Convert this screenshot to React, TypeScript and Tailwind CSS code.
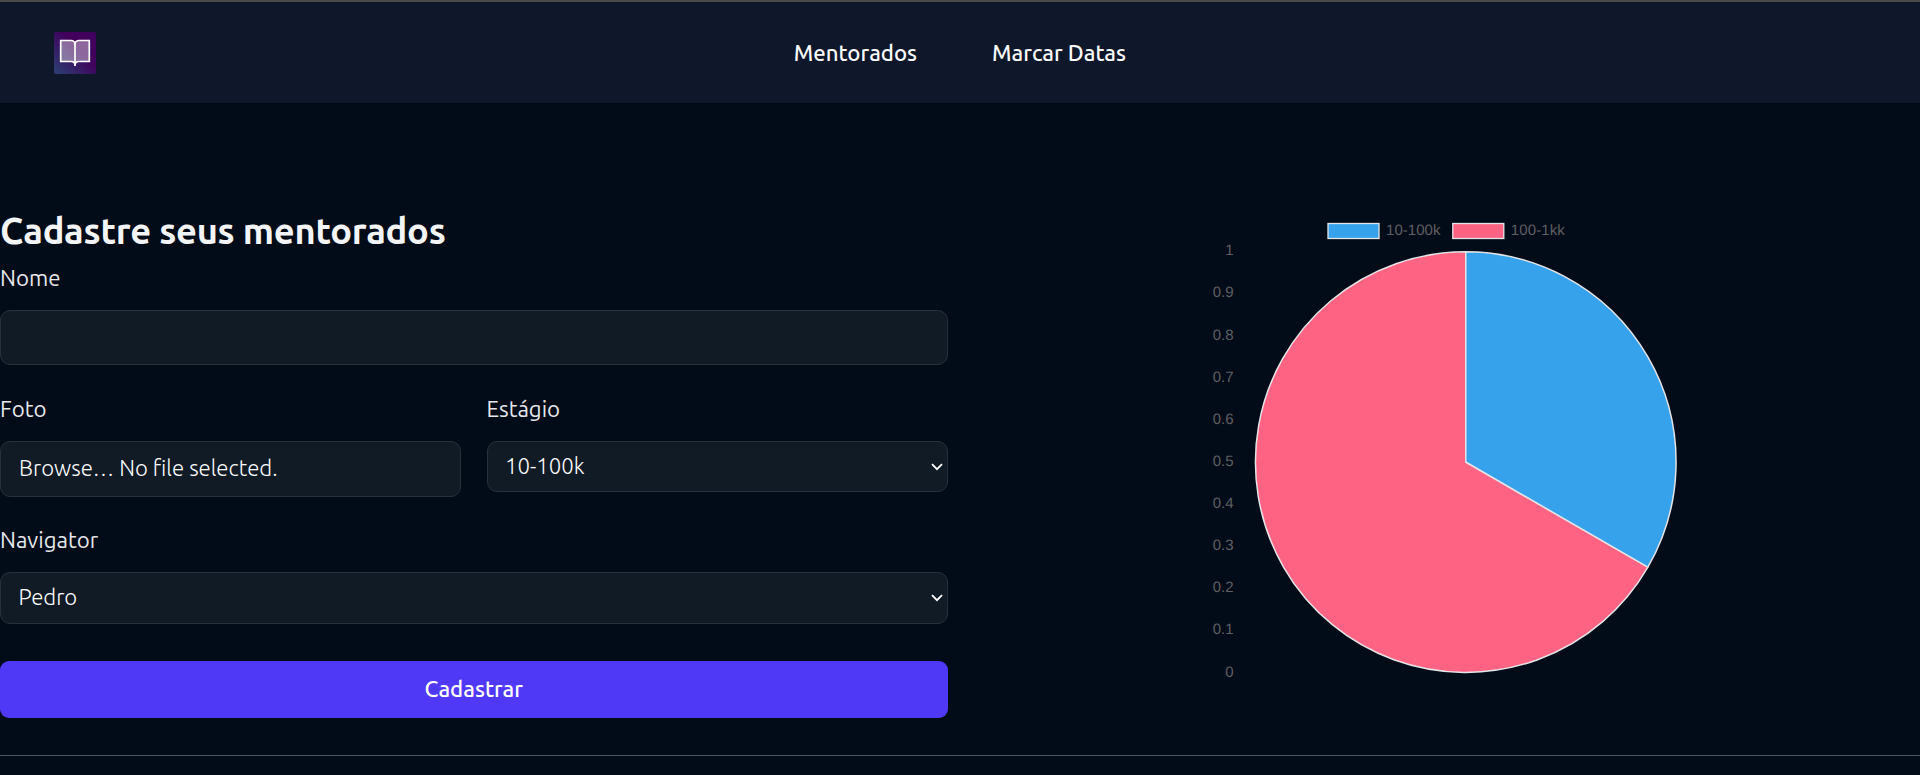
import React from "react";

const ticks = ["1", "0.9", "0.8", "0.7", "0.6", "0.5", "0.4", "0.3", "0.2", "0.1", "0"];

function Logo() {
  return (
    <svg className="ml-[54px] size-[42px]" viewBox="0 0 42 42">
      <defs>
        <linearGradient id="logo-bg" x1="0" y1="1" x2="1" y2="0">
          <stop offset="0" stopColor="#2b4272" />
          <stop offset="0.6" stopColor="#40005c" />
          <stop offset="1" stopColor="#41005d" />
        </linearGradient>
      </defs>
      <rect width="42" height="42" rx="2" fill="url(#logo-bg)" />
      <path
        d="M6.7 8.5H17C19.3 8.5 21 10.3 21 12.5C21 10.3 22.7 8.5 25 8.5H35.3V29.5H25C22.7 29.5 21 31 21 33.3C21 31 19.3 29.5 17 29.5H6.7Z"
        fill="#ffffff"
        fillOpacity="0.4"
        stroke="#ffffff"
        strokeWidth="1.7"
      />
      <path d="M21 11.5V34" stroke="#ffffff" strokeWidth="1.7" />
    </svg>
  );
}

function Field({ label, children }: { label: string; children: React.ReactNode }) {
  return (
    <div className="flex min-w-0 flex-1 flex-col">
      <label className="mb-[15px] h-[34px] text-[22.3px] leading-[34px] text-gray-200">{label}</label>
      {children}
    </div>
  );
}

function Select({ value, className }: { value: string; className: string }) {
  return (
    <div
      className={
        "flex items-center justify-between rounded-[10px] border border-[#27303b] bg-[#111b26] pl-[17.5px] pr-[4px] text-[22.2px] font-light text-gray-50 " +
        className
      }
    >
      <span className="-mt-[2px]">{value}</span>
      <svg className="h-[8px] w-[12px]" viewBox="0 0 12 8" fill="none">
        <path d="M1 1.2L6 6.2L11 1.2" stroke="#ffffff" strokeWidth="1.8" />
      </svg>
    </div>
  );
}

function PieChart() {
  return (
    <svg className="h-[480px] w-[500px]" viewBox="1200 210 500 480">
      <g
        fontFamily="Liberation Sans, Arial, sans-serif"
        fontSize="15"
        fill="#5e5f62"
        textRendering="geometricPrecision"
      >
        <rect x="1328" y="223.5" width="51" height="15" fill="#36a2eb" stroke="#e4e6e8" strokeWidth="1.3" />
        <text x="1386" y="235.2" textLength="54.5">10-100k</text>
        <rect x="1452.8" y="223.5" width="51" height="15" fill="#ff6384" stroke="#e4e6e8" strokeWidth="1.3" />
        <text x="1510.8" y="235.2" textLength="54">100-1kk</text>
        {ticks.map((t, i) => (
          <text key={t} x="1233.5" y={255.3 + i * 42.13} textAnchor="end">
            {t}
          </text>
        ))}
      </g>
      <g stroke="#e4e4e6" strokeWidth="1.5" strokeLinejoin="bevel">
        <path d="M1465.8 462V251.8A210.3 210.3 0 1 0 1647.9 567.2Z" fill="#ff6384" />
        <path d="M1465.8 462V251.8A210.3 210.3 0 0 1 1647.9 567.2Z" fill="#36a2eb" />
      </g>
    </svg>
  );
}

export default function App() {
  return (
    <div className="flex h-[775px] flex-col overflow-hidden bg-[#020c18] font-['Ubuntu','Noto_Sans',sans-serif]">
      <header className="grid h-[103px] shrink-0 grid-cols-[793.7px_1fr] items-center border-t-2 border-[#4a4a4a] bg-[#0f172a]">
        <Logo />
        <nav className="flex gap-[75px] text-[22.2px] font-medium text-gray-50">
          <a>Mentorados</a>
          <a>Marcar Datas</a>
        </nav>
      </header>
      <main className="flex h-[652px] shrink-0">
        <form className="flex w-[947.5px] shrink-0 flex-col pt-[106px]">
          <h1 className="h-[52px] text-[36.3px] font-semibold leading-[44px] tracking-[-0.27px] text-gray-100">
            Cadastre seus mentorados
          </h1>
          <div className="flex h-[131px]">
            <Field label="Nome">
              <div className="h-[55px] rounded-[10px] border border-[#27303b] bg-[#111b26]" />
            </Field>
          </div>
          <div className="flex h-[131px] gap-[25.5px]">
            <Field label="Foto">
              <div className="flex h-[56px] items-center rounded-[10px] border border-[#27303b] bg-[#111b26] pl-[18px] text-[22.2px] font-light text-gray-50">
                <span className="-mt-[2px]">Browse… No file selected.</span>
              </div>
            </Field>
            <Field label="Estágio">
              <Select value="10-100k" className="h-[51px]" />
            </Field>
          </div>
          <div className="flex h-[138px]">
            <Field label="Navigator">
              <Select value="Pedro" className="h-[52px]" />
            </Field>
          </div>
          <button className="h-[57px] rounded-[9px] bg-[#4f39f6] pb-[2px] text-[22.2px] font-medium text-white">
            Cadastrar
          </button>
        </form>
        <section className="flex pl-[252.5px] pt-[107px]">
          <PieChart />
        </section>
      </main>
      <hr className="shrink-0 border-t border-[#4a5565]" />
    </div>
  );
}
